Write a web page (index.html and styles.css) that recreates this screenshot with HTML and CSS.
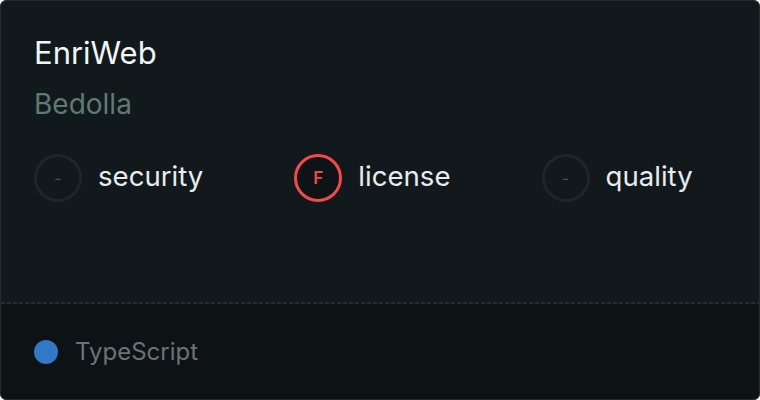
FILE: index.html
```html
<!DOCTYPE html>
<html>
<head>
<meta charset="utf-8">
<link rel="stylesheet" href="styles.css">
</head>
<body>
<div class="card">
  <div class="main">
    <div class="title">EnriWeb</div>
    <div class="owner">Bedolla</div>
    <div class="scores">
      <div class="score">
        <div class="ring ring-none">-</div>
        <div class="label">security</div>
      </div>
      <div class="score">
        <div class="ring ring-f">F</div>
        <div class="label">license</div>
      </div>
      <div class="score">
        <div class="ring ring-none">-</div>
        <div class="label">quality</div>
      </div>
    </div>
  </div>
  <div class="divider"></div>
  <div class="footer">
    <span class="dot"></span>
    <span class="lang">TypeScript</span>
  </div>
</div>
</body>
</html>
```
FILE: styles.css
```css
html, body {
  margin: 0;
  padding: 0;
  background: #ffffff;
}
body {
  width: 760px;
  height: 400px;
  font-family: Inter, "Noto Sans", sans-serif;
}
.card {
  box-sizing: border-box;
  width: 760px;
  height: 400px;
  border: 1px solid #242b2e;
  border-radius: 6px;
  overflow: hidden;
  background: #11191c;
  display: flex;
  flex-direction: column;
}
.main {
  box-sizing: border-box;
  height: 300px;
  padding: 33px 33px 0;
  display: flex;
  flex-direction: column;
}
.title {
  font-size: 31px;
  line-height: 38px;
  color: #f2f5f5;
}
.owner {
  margin-top: 15px;
  font-size: 28px;
  line-height: 34px;
  color: #5e7b72;
}
.scores {
  margin-top: 33px;
  display: flex;
  align-items: center;
  gap: 91px;
}
.score {
  display: flex;
  align-items: center;
  gap: 16px;
}
.ring {
  box-sizing: border-box;
  width: 48px;
  height: 48px;
  border-radius: 50%;
  border: 3px solid #1f2629;
  display: flex;
  align-items: center;
  justify-content: center;
}
.ring-none {
  color: #485154;
  font-size: 16px;
}
.ring-f {
  border-color: #f24a4a;
  color: #f24a4a;
  background: #0d1316;
  font-size: 17px;
  font-weight: 600;
}
.label {
  font-size: 27.6px;
  line-height: 32px;
  padding-bottom: 5px;
  color: #e8ecec;
}
.divider {
  height: 2px;
  background: repeating-linear-gradient(90deg, #252d30 0 4px, transparent 4px 6px);
  margin-top: 1px;
}
.footer {
  flex: 1;
  background: #0d1215;
  display: flex;
  align-items: center;
  gap: 17px;
  padding: 0 33px;
}
.dot {
  width: 24px;
  height: 24px;
  border-radius: 50%;
  background: #3178c6;
}
.lang {
  font-size: 24px;
  line-height: 29px;
  color: #6b7276;
}
```
